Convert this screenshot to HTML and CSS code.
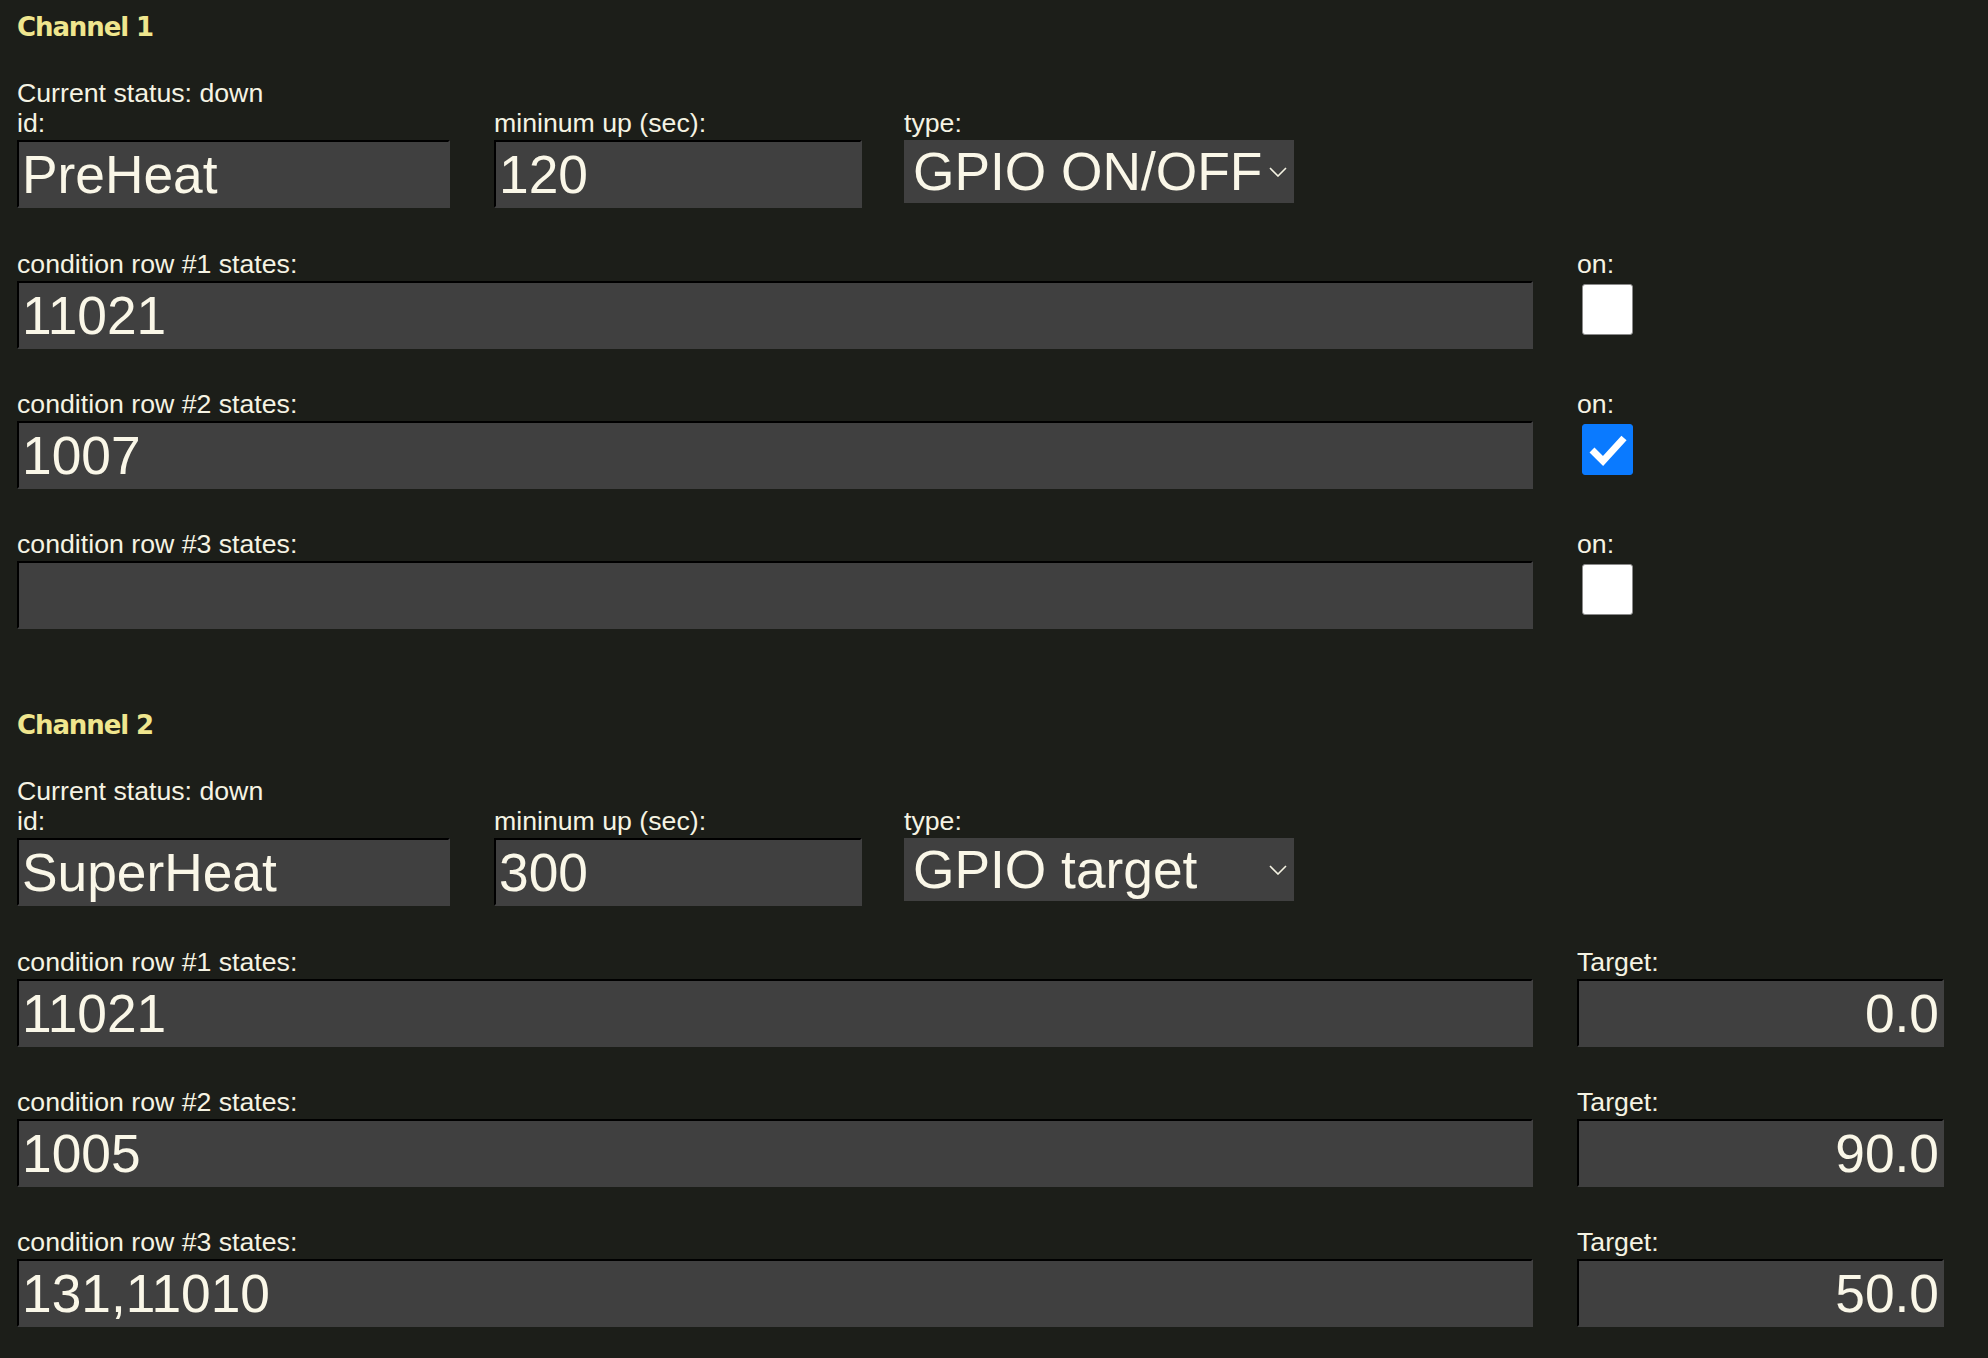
FILE: index.html
```html
<!DOCTYPE html>
<html lang="en">
<head>
<meta charset="utf-8">
<title>Channels</title>
<link rel="stylesheet" href="styles.css">
</head>
<body>
<section class="channel">
  <h2 class="title">Channel 1</h2>
  <div class="status">Current status: down</div>
  <div class="fields">
    <div class="field f-id"><label>id:</label><input class="txt" type="text" value="PreHeat"></div>
    <div class="field f-min"><label>mininum up (sec):</label><input class="txt" type="text" value="120"></div>
    <div class="field f-type"><label>type:</label>
      <span class="sel-wrap">
        <select class="sel"><option>GPIO ON/OFF</option><option>GPIO target</option></select>
        <svg class="chev" width="18" height="10" viewBox="0 0 18 10"><path d="M1 1 L9 9 L17 1" fill="none" stroke="#f5f3e3" stroke-width="1.6"/></svg>
      </span>
    </div>
  </div>
  <div class="rows">
    <div class="row">
      <div class="main"><label>condition row #1 states:</label><input class="txt" type="text" value="11021"></div>
      <div class="side"><label>on:</label><span class="cb"></span></div>
    </div>
    <div class="row">
      <div class="main"><label>condition row #2 states:</label><input class="txt" type="text" value="1007"></div>
      <div class="side"><label>on:</label><span class="cb checked"><svg width="49" height="49" viewBox="0 0 49 49"><path d="M9 25 L20 36 L41 13" fill="none" stroke="#fff" stroke-width="7"/></svg></span></div>
    </div>
    <div class="row">
      <div class="main"><label>condition row #3 states:</label><input class="txt" type="text" value=""></div>
      <div class="side"><label>on:</label><span class="cb"></span></div>
    </div>
  </div>
</section>
<section class="channel">
  <h2 class="title">Channel 2</h2>
  <div class="status">Current status: down</div>
  <div class="fields">
    <div class="field f-id"><label>id:</label><input class="txt" type="text" value="SuperHeat"></div>
    <div class="field f-min"><label>mininum up (sec):</label><input class="txt" type="text" value="300"></div>
    <div class="field f-type"><label>type:</label>
      <span class="sel-wrap">
        <select class="sel"><option>GPIO target</option><option>GPIO ON/OFF</option></select>
        <svg class="chev" width="18" height="10" viewBox="0 0 18 10"><path d="M1 1 L9 9 L17 1" fill="none" stroke="#f5f3e3" stroke-width="1.6"/></svg>
      </span>
    </div>
  </div>
  <div class="rows">
    <div class="row">
      <div class="main"><label>condition row #1 states:</label><input class="txt" type="text" value="11021"></div>
      <div class="side"><label>Target:</label><input class="txt num" type="text" value="0.0"></div>
    </div>
    <div class="row">
      <div class="main"><label>condition row #2 states:</label><input class="txt" type="text" value="1005"></div>
      <div class="side"><label>Target:</label><input class="txt num" type="text" value="90.0"></div>
    </div>
    <div class="row">
      <div class="main"><label>condition row #3 states:</label><input class="txt" type="text" value="131,11010"></div>
      <div class="side"><label>Target:</label><input class="txt num" type="text" value="50.0"></div>
    </div>
  </div>
</section>
</body>
</html>
```
FILE: styles.css
```css
html, body {
  background: #1c1e19;
}
body {
  margin: 0;
  padding: 12px 0 0 17px;
  min-height: 1358px;
  box-sizing: border-box;
  font-family: "Liberation Sans", Arial, sans-serif;
  font-size: 26.7px;
  color: #f5f3e3;
}
.channel + .channel {
  margin-top: 81px;
}
.title {
  margin: 0;
  font-family: "DejaVu Sans", Verdana, sans-serif;
  font-weight: 700;
  font-size: 26px;
  letter-spacing: -1.1px;
  line-height: 30px;
  color: #efe68e;
}
.status {
  margin-top: 37px;
  line-height: 28px;
}
.fields {
  display: flex;
  align-items: flex-start;
}
label {
  display: block;
  line-height: 33px;
}
.f-id { width: 433px; margin-right: 44px; }
.f-min { width: 368px; margin-right: 42px; }
.f-type { width: 390px; }
.txt {
  display: block;
  box-sizing: border-box;
  width: 100%;
  height: 68px;
  margin: 0;
  padding: 0 0 0 3px;
  border: 2px solid;
  border-color: #000 #404040 #404040 #000;
  background: #404040;
  color: #faf7e8;
  font-family: "Liberation Sans", Arial, sans-serif;
  font-size: 53.3px;
  outline: none;
}
.num {
  text-align: right;
  padding: 0 3px 0 0;
}
.sel-wrap {
  position: relative;
  display: block;
  width: 390px;
  height: 63px;
}
.sel {
  -webkit-appearance: none;
  appearance: none;
  display: block;
  box-sizing: border-box;
  width: 390px;
  height: 63px;
  margin: 0;
  padding: 0 0 0 9px;
  border: none;
  border-radius: 0;
  background: #404040;
  color: #faf7e8;
  font-family: "Liberation Sans", Arial, sans-serif;
  font-size: 53.3px;
  outline: none;
}
.chev {
  position: absolute;
  right: 7px;
  top: 27px;
}
.rows {
  margin-top: 40px;
  display: flex;
  flex-direction: column;
  gap: 39px;
}
.row {
  display: flex;
  gap: 44px;
}
.main { width: 1516px; }
.side { width: 367px; }
.cb {
  display: block;
  box-sizing: border-box;
  width: 51px;
  height: 51px;
  margin: 3px 0 0 5px;
  background: #fff;
  border: 1px solid #8a8a8a;
  border-radius: 3px;
}
.cb.checked {
  background: #0a7aff;
  border-color: #0a7aff;
}
.cb svg { display: block; }
```
